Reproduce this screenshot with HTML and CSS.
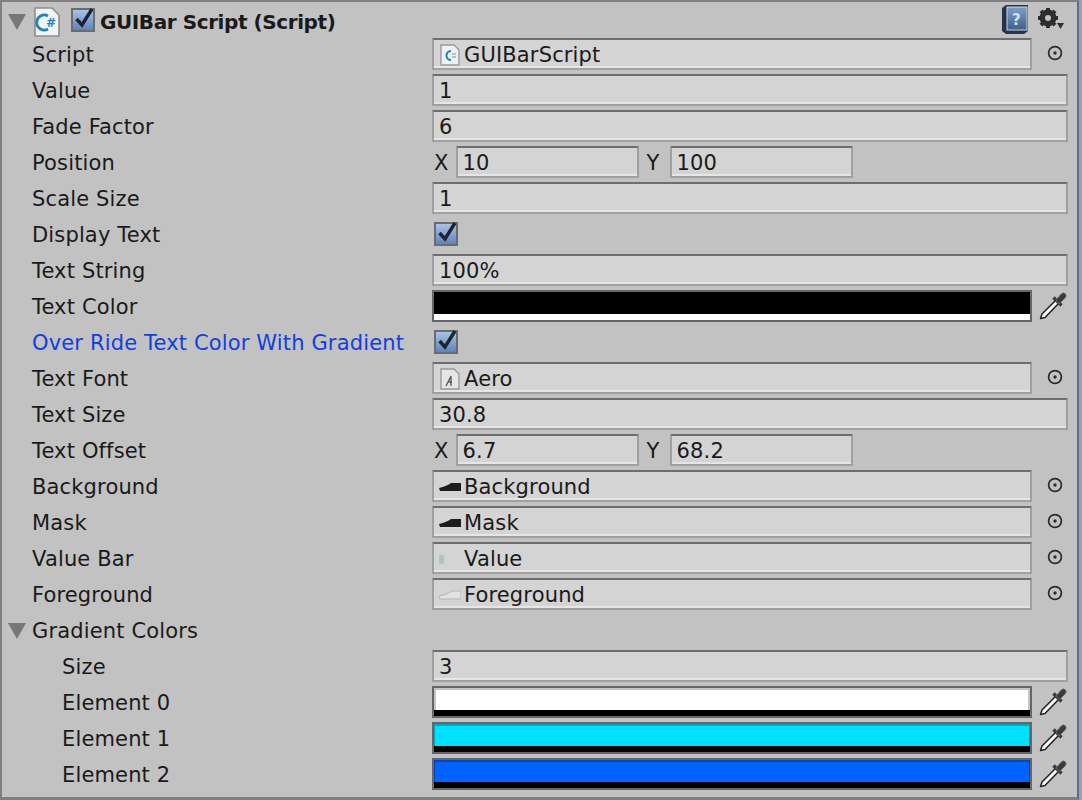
FILE: index.html
```html
<!DOCTYPE html>
<html lang="en">
<head>
<meta charset="utf-8">
<title>GUIBar Script</title>
<link rel="stylesheet" href="styles.css">
</head>
<body>
<svg class="defs" width="0" height="0" aria-hidden="true">
  <symbol id="target" viewBox="0 0 16 16">
    <circle cx="8" cy="8" r="6.4" fill="none" stroke="#2b2b2b" stroke-width="1.7"/>
    <circle cx="8" cy="8" r="1.7" fill="#2b2b2b"/>
  </symbol>
  <symbol id="dropper" viewBox="0 0 28 30">
    <path d="M1.500 27.500 L3 23 L17 9 L20 12 L6 26.500 Z" fill="#f6f6f6" stroke="#222" stroke-width="1.5" stroke-linejoin="round"/>
    <path d="M14.500 6.500 L22.500 14.500" stroke="#3a3a3a" stroke-width="3.400"/>
    <path d="M17 9 L22.500 2.800 Q24.500 1 26.500 3 Q28 5 26 7 L20 13 Z" fill="#3a3a3a" stroke="#666"/>
  </symbol>
  <symbol id="tick" viewBox="0 0 24 24">
    <path d="M5.500 13 L11 19 L21 3" fill="none" stroke="#1c2430" stroke-width="3.400"/>
  </symbol>
</svg>
<main class="inspector">
  <header class="title-row">
    <svg class="arrow" viewBox="0 0 18 16"><path d="M0 0H18L9 16Z" fill="#777"/></svg>
    <svg class="cs-icon" viewBox="0 0 26 30">
      <path d="M1 1H18L25 8V29H1Z" fill="#f2f4f6" stroke="#8d8d8d" stroke-width="1.6"/>
      <path d="M14 9A7.500 7.500 0 1 0 14 22" fill="none" stroke="#2283b8" stroke-width="2.800"/>
      <text x="12" y="20" class="cs-hash">#</text>
    </svg>
    <span class="check check-title"><svg><use href="#tick"/></svg></span>
    <h1 class="title">GUIBar Script (Script)</h1>
    <svg class="help" viewBox="0 0 26 29">
      <defs><linearGradient id="bookfill" x1="0" y1="0" x2="0" y2="1"><stop offset="0" stop-color="#7f9fc6"/><stop offset="1" stop-color="#3d5f8c"/></linearGradient></defs>
      <path d="M0 3 L4 0H26V26L22 29H4L0 26Z" fill="#22344f"/>
      <rect x="5" y="2" width="20" height="23" fill="url(#bookfill)" stroke="#cfd6df"/>
      <text x="14.500" y="20" class="help-q">?</text>
    </svg>
    <svg class="gear" viewBox="0 0 26 22">
      <g fill="#2e2e2e">
        <circle cx="10" cy="10" r="6.400" fill="none" stroke="#2e2e2e" stroke-width="4"/>
        <rect x="8" y="0" width="4" height="20"/>
        <rect x="0" y="8" width="20" height="4"/>
        <rect x="8" y="0" width="4" height="20" transform="rotate(45 10 10)"/>
        <rect x="8" y="0" width="4" height="20" transform="rotate(-45 10 10)"/>
        <path d="M19 15H26L22.500 21Z"/>
      </g>
      <circle cx="10" cy="10" r="3" fill="#c2c2c2"/>
    </svg>
  </header>

  <div class="row"><span class="label">Script</span>
    <div class="value"><span class="field object"><svg class="thumb" viewBox="0 0 20 22"><path d="M1 1H14L19 6V21H1Z" fill="#eef1f4" stroke="#9a9a9a" stroke-width="1.400"/><path d="M11 7A4.500 4.500 0 1 0 11 16" fill="none" stroke="#2283b8" stroke-width="2"/><path d="M12 10H16M12 13H16" stroke="#5b9cc4"/></svg><span class="obj-text">GUIBarScript</span></span><svg class="target"><use href="#target"/></svg></div></div>
  <div class="row"><span class="label">Value</span><div class="value"><span class="field full">1</span></div></div>
  <div class="row"><span class="label">Fade Factor</span><div class="value"><span class="field full">6</span></div></div>
  <div class="row"><span class="label">Position</span>
    <div class="value"><span class="axis axis-x">X</span><span class="field short">10</span><span class="axis axis-y">Y</span><span class="field short">100</span></div></div>
  <div class="row"><span class="label">Scale Size</span><div class="value"><span class="field full">1</span></div></div>
  <div class="row"><span class="label">Display Text</span>
    <div class="value"><span class="check"><svg><use href="#tick"/></svg></span></div></div>
  <div class="row"><span class="label">Text String</span><div class="value"><span class="field full">100%</span></div></div>
  <div class="row"><span class="label">Text Color</span>
    <div class="value"><span class="swatch"><span class="swatch-main c-black"></span><span class="swatch-alpha a-white"></span></span><svg class="dropper"><use href="#dropper"/></svg></div></div>
  <div class="row"><span class="label modified">Over Ride Text Color With Gradient</span>
    <div class="value"><span class="check"><svg><use href="#tick"/></svg></span></div></div>
  <div class="row"><span class="label">Text Font</span>
    <div class="value"><span class="field object"><svg class="thumb" viewBox="0 0 20 22"><path d="M1 1H14L19 6V21H1Z" fill="#e4e6e8" stroke="#9a9a9a" stroke-width="1.400"/><path d="M6 18L11 8V18M8 14H12" fill="none" stroke="#555" stroke-width="1.300"/></svg><span class="obj-text">Aero</span></span><svg class="target"><use href="#target"/></svg></div></div>
  <div class="row"><span class="label">Text Size</span><div class="value"><span class="field full">30.8</span></div></div>
  <div class="row"><span class="label">Text Offset</span>
    <div class="value"><span class="axis axis-x">X</span><span class="field short">6.7</span><span class="axis axis-y">Y</span><span class="field short">68.2</span></div></div>
  <div class="row"><span class="label">Background</span>
    <div class="value"><span class="field object"><svg class="thumb" viewBox="0 0 22 22"><path d="M0 12Q8 10 12 7H22V15H1Z" fill="#1d1d1d"/></svg><span class="obj-text">Background</span></span><svg class="target"><use href="#target"/></svg></div></div>
  <div class="row"><span class="label">Mask</span>
    <div class="value"><span class="field object"><svg class="thumb" viewBox="0 0 22 22"><path d="M0 12Q8 10 12 7H22V15H1Z" fill="#1d1d1d"/></svg><span class="obj-text">Mask</span></span><svg class="target"><use href="#target"/></svg></div></div>
  <div class="row"><span class="label">Value Bar</span>
    <div class="value"><span class="field object"><svg class="thumb" viewBox="0 0 22 22"><rect x="0" y="7" width="5" height="9" fill="#a9c6ce"/></svg><span class="obj-text">Value</span></span><svg class="target"><use href="#target"/></svg></div></div>
  <div class="row"><span class="label">Foreground</span>
    <div class="value"><span class="field object"><svg class="thumb" viewBox="0 0 22 22"><path d="M0 12Q8 11 13 7H22V15H1Z" fill="#e2e2e2" stroke="#b4b4b4"/></svg><span class="obj-text">Foreground</span></span><svg class="target"><use href="#target"/></svg></div></div>

  <div class="row"><span class="label foldout"><svg class="arrow arrow-fold" viewBox="0 0 18 16"><path d="M0 0H18L9 16Z" fill="#777"/></svg>Gradient Colors</span></div>
  <div class="row"><span class="label nested">Size</span><div class="value"><span class="field full">3</span></div></div>
  <div class="row"><span class="label nested">Element 0</span>
    <div class="value"><span class="swatch"><span class="swatch-main c-white"></span><span class="swatch-alpha a-black"></span></span><svg class="dropper"><use href="#dropper"/></svg></div></div>
  <div class="row"><span class="label nested">Element 1</span>
    <div class="value"><span class="swatch"><span class="swatch-main c-cyan"></span><span class="swatch-alpha a-black"></span></span><svg class="dropper"><use href="#dropper"/></svg></div></div>
  <div class="row"><span class="label nested">Element 2</span>
    <div class="value"><span class="swatch"><span class="swatch-main c-blue"></span><span class="swatch-alpha a-black"></span></span><svg class="dropper"><use href="#dropper"/></svg></div></div>
</main>
</body>
</html>
```
FILE: styles.css
```css
* { box-sizing: border-box; }
html, body { margin: 0; padding: 0; }
body { width: 1082px; height: 800px; overflow: hidden; background: #8fa3c6; }
.defs { position: absolute; }

.inspector {
  width: 1079px;
  height: 800px;
  background: #c2c2c2;
  border-top: 2px solid #808080;
  border-bottom: 3px solid #808080;
  border-left: 2px solid #808080;
  border-right: 2px solid #646c7c;
  font-family: "DejaVu Sans", sans-serif;
  font-size: 21px;
  letter-spacing: 0.15px;
  color: #1a1a1a;
  overflow: hidden;
}

.title-row { display: flex; align-items: center; height: 34px; padding: 6px 0 0 6px; }
.arrow { width: 18px; height: 16px; flex: none; }
.cs-icon { width: 26px; height: 30px; margin-left: 8px; flex: none; }
.cs-hash { font: bold 12px "DejaVu Sans", sans-serif; fill: #2283b8; }
.title { font-size: 20px; font-weight: bold; letter-spacing: -0.42px; margin: -1px 0 0 5px; flex: 1; white-space: nowrap; }
.help { width: 26px; height: 29px; flex: none; margin-top: -6px; }
.help-q { font: bold 15px "DejaVu Sans", sans-serif; fill: #d8e0ea; text-anchor: middle; }
.gear { width: 26px; height: 22px; flex: none; margin: -7px 13px 0 10px; }

.row { display: flex; align-items: center; height: 36px; }
.label { width: 430px; padding: 2px 0 0 30px; white-space: nowrap; flex: none; }
.label.nested { padding-left: 60px; }
.label.modified { color: #0f3fe0; }
.label.foldout { padding-left: 6px; display: flex; align-items: center; }
.arrow-fold { margin-right: 6px; }

.value { display: flex; align-items: center; flex: 1; height: 100%; }

.field {
  display: flex;
  align-items: center;
  height: 32px;
  background: #d4d4d4;
  border: 2px solid #a0a0a0;
  border-top-color: #6e6e6e;
  box-shadow: inset 0 -2px 0 #e6e6e6;
  padding: 1px 0 0 5px;
  white-space: nowrap;
}
.field.full { width: 636px; }
.field.object { width: 600px; }
.field.short { width: 183px; }
.thumb { width: 22px; height: 22px; flex: none; margin-right: 3px; }
.obj-text { display: block; }

.axis { flex: none; padding-top: 2px; }
.axis-x { margin: 0 7px 0 2px; }
.axis-y { margin: 0 10px 0 8px; }

.target { width: 16px; height: 16px; margin: -2px 0 0 15px; flex: none; }
.dropper { width: 28px; height: 30px; margin-left: 7px; flex: none; }

.check {
  display: block;
  width: 24px;
  height: 24px;
  margin-left: 2px;
  background: linear-gradient(#a9c2e8, #5f83bd);
  border: 2px solid #6c6c6c;
  flex: none;
}
.check svg { display: block; width: 24px; height: 24px; margin: -4px 0 0 -2px; overflow: visible; }
.check-title { margin-left: 11px; margin-top: -4px; }

.swatch {
  display: flex;
  flex-direction: column;
  width: 600px;
  height: 32px;
  border: 2px solid #666;
  flex: none;
}
.swatch-main { display: block; flex: 1; }
.swatch-alpha { display: block; height: 6px; }
.c-black { background: #000; }
.c-white { background: #fff; border: 2px solid #c4c4c4; border-bottom: 0; }
.c-cyan { background: #00e0ff; border: 1px solid #00a3bb; border-top-width: 2px; border-bottom: 0; }
.c-blue { background: #0062ff; border: 1px solid #0048bb; border-top-width: 2px; border-bottom: 0; }
.a-white { background: #fff; }
.a-black { background: #000; }
```
